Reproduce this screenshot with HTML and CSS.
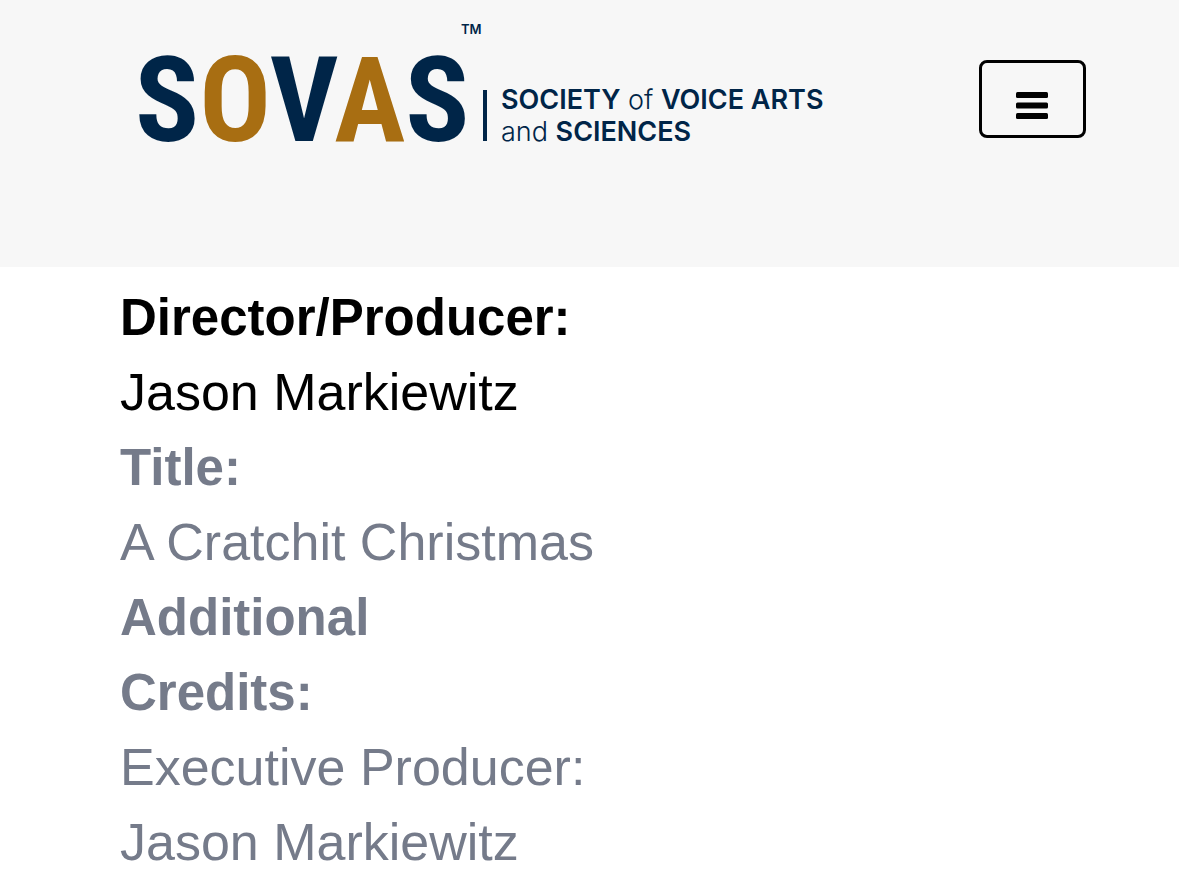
FILE: index.html
```html
<!DOCTYPE html>
<html lang="en">
<head>
<meta charset="utf-8">
<meta name="viewport" content="width=device-width, initial-scale=1">
<title>SOVAS</title>
<link rel="stylesheet" href="styles.css">
</head>
<body>
<header class="site-header">
  <a class="logo" href="#" aria-label="SOVAS home">
    <svg class="logo-art" viewBox="0 0 700 130" role="img">
      <text class="wordmark" x="-3" y="123">S<tspan class="gold">O</tspan>V<tspan class="gold">A</tspan>S</text>
      <text class="trademark" x="323" y="16">TM</text>
      <rect class="divider" x="345" y="72" width="4" height="51"/>
      <text class="tagline" x="363" y="91"><tspan class="strong">SOCIETY</tspan> of <tspan class="strong">VOICE ARTS</tspan></text>
      <text class="tagline" x="363" y="123">and <tspan class="strong">SCIENCES</tspan></text>
    </svg>
  </a>
  <button class="menu-button" type="button" aria-label="Menu">
    <svg class="menu-icon" viewBox="0 0 32 27" aria-hidden="true">
      <rect width="32" height="6" rx="1.5"/><rect y="10.5" width="32" height="6" rx="1.5"/><rect y="21" width="32" height="6" rx="1.5"/>
    </svg>
  </button>
</header>
<main class="credits">
  <dl class="credit-list">
    <div class="credit lead"><dt>Director/Producer:</dt><dd>Jason Markiewitz</dd></div>
    <div class="credit"><dt>Title:</dt><dd>A Cratchit Christmas</dd></div>
    <div class="credit"><dt>Additional<br>Credits:</dt><dd>Executive Producer:<br>Jason Markiewitz</dd></div>
  </dl>
</main>
</body>
</html>
```
FILE: styles.css
```css
* { box-sizing: border-box; }
body {
  margin: 0;
  background: #fff;
  color: #757b8a;
  font-family: "Liberation Sans", Arial, sans-serif;
}
.site-header {
  display: flex;
  align-items: flex-start;
  justify-content: space-between;
  padding: 18px 93px 119px 138px;
  background: #f7f7f7;
}
.logo { display: block; width: 700px; }
.logo-art { display: block; width: 100%; height: auto; fill: #002548; overflow: visible; }
.wordmark { font: 700 119px "Roboto Condensed", "Liberation Sans Narrow", sans-serif; }
.gold { fill: #a86e12; }
.trademark { font: 600 13px Inter, sans-serif; }
.tagline { font: 300 27px Inter, sans-serif; }
.strong { font-weight: 600; }
.menu-button {
  display: flex;
  padding: 29px 35px 16px 34px;
  margin-top: 42px;
  border: 3px solid #000;
  border-radius: 8px;
  background: transparent;
}
.menu-icon { display: block; width: 32px; height: 27px; }
.credits { padding: 13px 120px 10px; }
.credit-list { margin: 0; font-size: 52px; line-height: 75px; }
.lead { color: #000; }
dt { font-size: 51px; font-weight: 700; }
dd { margin: 0; }
```
